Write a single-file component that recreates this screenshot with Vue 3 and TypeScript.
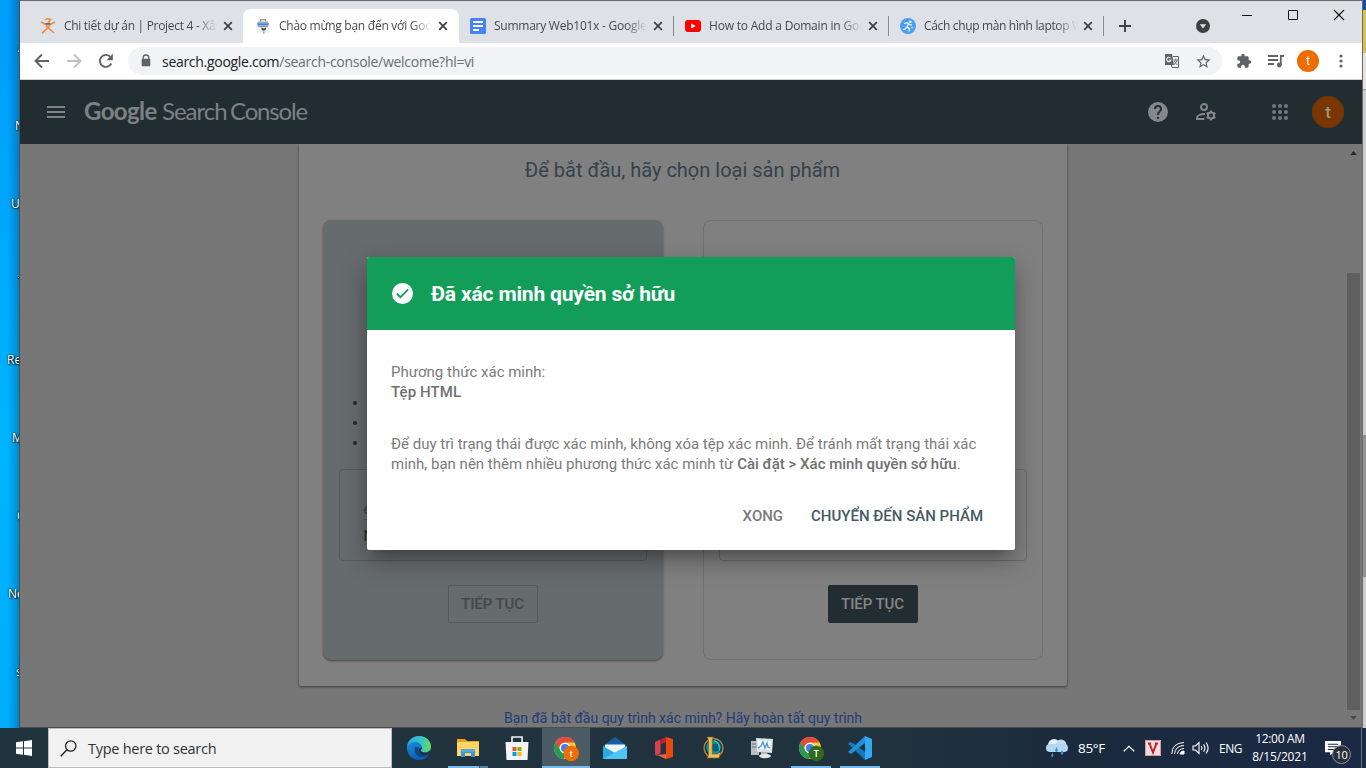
<script setup lang="ts">
interface Tab {
  title: string
  icon: 'person' | 'console' | 'docs' | 'youtube' | 'runner'
  spacing: number
  active?: boolean
  divider?: boolean
}

interface TaskItem {
  name: string
  state?: 'open' | 'stacked' | 'active'
}

const tabs: Tab[] = [
  { title: 'Chi tiết dự án | Project 4 - Xây', icon: 'person', spacing: -0.3 },
  { title: 'Chào mừng bạn đến với Google', icon: 'console', spacing: -0.26, active: true },
  { title: 'Summary Web101x - Google D', icon: 'docs', spacing: -0.25, divider: true },
  { title: 'How to Add a Domain in Google', icon: 'youtube', spacing: -0.2, divider: true },
  { title: 'Cách chụp màn hình laptop W', icon: 'runner', spacing: -0.34, divider: true },
]

const shortcuts = [
  { label: 'A', inset: 18 },
  { label: 'N', inset: 15 },
  { label: 'U', inset: 11 },
  { label: 'T', inset: 18 },
  { label: 'Re', inset: 7 },
  { label: 'M', inset: 12 },
  { label: 'C', inset: 17 },
  { label: 'Ne', inset: 8 },
  { label: 's', inset: 16 },
]

const taskItems: TaskItem[] = [
  { name: 'edge' },
  { name: 'explorer', state: 'stacked' },
  { name: 'store' },
  { name: 'chrome', state: 'active' },
  { name: 'mail' },
  { name: 'office' },
  { name: 'league' },
  { name: 'monitor' },
  { name: 'chrome2', state: 'open' },
  { name: 'code', state: 'open' },
]
</script>

<template>
  <div class="screen">
    <div class="workspace">
      <aside class="desktop">
        <span v-for="s in shortcuts" :key="s.label" class="shortcut" :style="{ paddingLeft: s.inset + 'px' }">{{ s.label }}</span>
      </aside>

      <section class="window">
        <div class="tabstrip">
          <div v-for="t in tabs" :key="t.title" class="tab" :class="{ active: t.active, divider: t.divider }">
            <svg v-if="t.icon === 'person'" class="favicon" viewBox="0 0 16 16" fill="none" stroke="#f08a3c" stroke-width="1.6">
              <path d="M5 1.6Q8-.2 10.5 1.6L8 5M1 4l5 2.5h4L15 4M6 6.5 8 10l2-3.500M8 9.500 2 15.300M8 9.500l6 5.500" /><path d="M5.500 5.800h5" stroke="#55709b" />
            </svg>
            <svg v-else-if="t.icon === 'console'" class="favicon" viewBox="0 0 16 16">
              <path d="M5.500 3.500V1.700h5v1.800" fill="none" stroke="#777b80" stroke-width="1.100" /><path d="M3 3.500h10L14.500 6v9h-13V6z" fill="#eceef0" /><path d="M3 3.500h10L14 6H2z" fill="#a9adb2" /><path d="M2.500 5.500h11v2h-11z" fill="#3b82e8" /><path d="M3 8.500h10" stroke="#8d9196" /><path d="M6.500 9.500v2l2 1.500 2.500-1.500v-2l-2 1z" fill="#46494d" /><path d="M8 12.500h1.500V16H8z" fill="#b6b9bc" />
            </svg>
            <svg v-else-if="t.icon === 'docs'" class="favicon" viewBox="0 0 16 16">
              <rect width="16" height="16" rx="1.500" fill="#4285f4" /><path d="M3 4h10M3 8h10M3 12h6" stroke="#fff" stroke-width="2" />
            </svg>
            <svg v-else-if="t.icon === 'youtube'" class="favicon" viewBox="0 0 16 16">
              <rect y="2" width="16" height="12" rx="3" fill="#f00" /><path d="m6.200 5.500 4.600 2.500-4.600 2.500z" fill="#fff" />
            </svg>
            <svg v-else class="favicon" viewBox="0 0 16 16">
              <circle cx="8" cy="8" r="8" fill="#4a9ff5" /><circle cx="10.300" cy="3.700" r="1.300" fill="#fff" /><path d="m4 5.500 3-.8 2.500 1.800 2.500.5M8.500 6 6.800 9l2.700 1.500-.5 3M6.800 9l-1 1.800L3 11.500M11.500 9l1 1" fill="none" stroke="#fff" stroke-width="1.200" />
            </svg>
            <span class="tab-title" :style="{ letterSpacing: t.spacing + 'px' }">{{ t.title }}</span>
            <svg class="tab-close" viewBox="0 0 16 16"><path d="m4.200 4.200 7.600 7.600M11.800 4.200l-7.600 7.600" stroke="#3c4043" stroke-width="1.700" /></svg>
          </div>
          <svg class="new-tab" viewBox="0 0 16 16"><path d="M8 2v12M2 8h12" stroke="#3c4043" stroke-width="1.900" /></svg>
          <svg class="tab-search" viewBox="0 0 14 14"><circle cx="7" cy="7" r="7" fill="#3c4043" /><path d="M3.800 5.200h6.400L7 9.400z" fill="#dee1e6" /></svg>
          <div class="window-buttons">
            <svg viewBox="0 0 12 12"><path d="M1 6.500h10" stroke="#111" /></svg>
            <svg viewBox="0 0 12 12"><path d="M1.500 1.500h9v9h-9z" fill="none" stroke="#111" /></svg>
            <svg viewBox="0 0 12 12"><path d="m1 1 10 10M11 1 1 11" stroke="#111" stroke-width="1.100" /></svg>
          </div>
        </div>

        <div class="toolbar">
          <svg class="nav" viewBox="0 0 16 16"><path d="M15 8H2M8 1.500 1.500 8 8 14.500" fill="none" stroke="#5f6368" stroke-width="1.900" /></svg>
          <svg class="nav" viewBox="0 0 16 16"><path d="M1 8h13M8 1.500 14.500 8 8 14.500" fill="none" stroke="#bdc1c6" stroke-width="1.900" /></svg>
          <svg class="nav" viewBox="0 0 16 16"><path d="M13.300 10.500A6 6 0 1 1 12.500 4" fill="none" stroke="#5f6368" stroke-width="1.900" /><path d="M14.800.8v6.400H8.500z" fill="#5f6368" /></svg>
          <div class="omnibox">
            <svg class="lock" viewBox="0 0 10 14"><path d="M2.200 6V3.800a2.800 2.800 0 0 1 5.600 0V6" fill="none" stroke="#5f6368" stroke-width="1.300" /><rect x=".7" y="4.700" width="8.600" height="7.600" rx="1" fill="#5f6368" /></svg>
            <span class="url"><b>search.google.com</b>/search-console/welcome?hl=vi</span>
            <svg class="translate" viewBox="0 0 16 16"><path d="M1 1h7l2 11H1z" fill="#5f6368" /><path d="M6.500 5A2.200 2.200 0 1 0 7 7H4.800" fill="none" stroke="#fff" stroke-width="1.100" /><path d="M9 3.500h5.500v11H8L7.500 12" fill="none" stroke="#5f6368" /><path d="M9.500 7H14M11.700 5.500V7M13 7q-.6 3-3 4.500M10.300 8q1 2 3 4" fill="none" stroke="#5f6368" stroke-width=".9" /></svg>
            <svg class="star" viewBox="0 0 24 24"><path fill="#5f6368" d="m22 9.240-7.190-.62L12 2 9.190 8.630 2 9.240l5.460 4.730L5.820 21 12 17.270 18.180 21l-1.630-7.030zM12 15.400l-3.760 2.270 1-4.280-3.320-2.880 4.380-.38L12 6.100l1.710 4.040 4.380.38-3.320 2.880 1 4.280z" /></svg>
          </div>
          <svg class="ext puzzle" viewBox="0 0 24 24"><path fill="#5f6368" d="M20.500 11H19V7c0-1.100-.9-2-2-2h-4V3.500a2.500 2.500 0 0 0-5 0V5H4c-1.100 0-2 .9-2 2v3.800h1.500a2.700 2.700 0 0 1 0 5.400H2V20c0 1.100.9 2 2 2h3.800v-1.500a2.700 2.700 0 0 1 5.400 0V22H17c1.100 0 2-.9 2-2v-4h1.500a2.500 2.500 0 0 0 0-5" /></svg>
          <svg class="ext" viewBox="0 0 16 16"><path d="M0 3h10M0 7h10M0 11h6" stroke="#5f6368" stroke-width="1.800" /><path d="M12.800 12V3H16" fill="none" stroke="#5f6368" stroke-width="1.800" /><circle cx="11.300" cy="12" r="2.400" fill="#5f6368" /></svg>
          <span class="profile">t</span>
          <svg class="kebab" viewBox="0 0 4 16"><g fill="#5f6368"><circle cx="2" cy="3" r="1.600" /><circle cx="2" cy="8" r="1.600" /><circle cx="2" cy="13" r="1.600" /></g></svg>
        </div>

        <header class="appbar">
          <svg class="menu" viewBox="0 0 18 12"><path d="M0 1h18M0 6h18M0 11h18" stroke="#808486" stroke-width="2" /></svg>
          <div class="brand"><span class="brand-google">Google</span><span class="brand-search">Search</span><span class="brand-console">Console</span></div>
          <svg class="help" viewBox="2 2 20 20"><path fill="#858889" d="M12 2a10 10 0 1 0 0 20 10 10 0 0 0 0-20m1 17h-2v-2h2zm2.070-7.750-.9.920C13.450 12.900 13 13.500 13 15h-2v-.5c0-1.100.45-2.100 1.170-2.830l1.240-1.260c.37-.36.59-.86.590-1.410a2 2 0 0 0-4 0H8a4 4 0 0 1 8 0c0 .88-.36 1.680-.93 2.250" /></svg>
          <svg class="manage" viewBox="0 0 22 20" fill="none" stroke="#858889" stroke-width="1.900"><circle cx="9" cy="5" r="3" /><path d="M9.500 17H2v-1.500c0-2 3.500-3.500 8-3.500" /><circle cx="16" cy="13.500" r="3" /><path d="M16 8.500v2M16 16.500v2M11.700 11l1.700 1M18.600 15l1.700 1M11.700 16l1.700-1M18.600 12l1.700-1" stroke-width="2.200" /></svg>
          <svg class="apps" viewBox="0 0 16 16"><g fill="#777b7d"><circle v-for="n in 9" :key="n" :cx="2 + ((n - 1) % 3) * 6" :cy="2 + Math.floor((n - 1) / 3) * 6" r="2" /></g></svg>
          <span class="account">t</span>
        </header>

        <main class="viewport">
          <div class="sheet">
            <h1>Để bắt đầu, hãy chọn loại sản phẩm</h1>
            <div class="options">
              <div class="option chosen">
                <ul><li></li><li></li><li></li></ul>
                <div class="field"><span class="sample">example.com</span><span class="hint">Nhập miền</span></div>
                <button class="go disabled">TIẾP TỤC</button>
              </div>
              <div class="option">
                <div class="field"></div>
                <button class="go">TIẾP TỤC</button>
              </div>
            </div>
          </div>
          <a class="resume">Bạn đã bắt đầu quy trình xác minh? Hãy hoàn tất quy trình</a>
          <div class="scrollbar">
            <svg viewBox="0 0 8 5"><path d="M0 5 4 0l4 5z" fill="#292929" /></svg>
            <div class="thumb"></div>
            <svg viewBox="0 0 8 5"><path d="m0 0 4 5 4-5z" fill="#464646" /></svg>
          </div>
        </main>

        <div class="dialog">
          <div class="dialog-head">
            <svg viewBox="2 2 20 20"><circle cx="12" cy="12" r="10" fill="#fff" /><path d="m6.500 12 3.500 3.500 7.500-7.500" fill="none" stroke="#129e59" stroke-width="1.700" /></svg>
            <h2>Đã xác minh quyền sở hữu</h2>
          </div>
          <div class="dialog-body">
            <p class="method">Phương thức xác minh:<br /><b>Tệp HTML</b></p>
            <p class="note">Để duy trì trạng thái được xác minh, không xóa tệp xác minh. Để tránh mất trạng thái xác<br />minh, bạn nên thêm nhiều phương thức xác minh từ <b>Cài đặt &gt; Xác minh quyền sở hữu</b>.</p>
            <div class="actions"><button>XONG</button><button class="primary">CHUYỂN ĐẾN SẢN PHẨM</button></div>
          </div>
        </div>
      </section>

      <aside class="behind">
        <i class="blue"></i><i class="yellow"></i><i class="plain"></i><i class="track"></i><i class="grip"></i><i class="rest"></i>
      </aside>
    </div>

    <footer class="taskbar">
      <div class="start"><svg viewBox="0 0 16 16"><path d="M0 2.300 7 1.300v6.300H0zM8 1.200 16 0v7.600H8zM0 8.500h7v6.300l-7-1zM8 8.500h8V16l-8-1.200z" fill="#fff" /></svg></div>
      <div class="search">
        <svg viewBox="0 0 17 17"><circle cx="10.700" cy="6" r="5.200" fill="none" stroke="#222" stroke-width="1.300" /><path d="M7 9.800.7 16.200" stroke="#222" stroke-width="1.400" /></svg>
        <span>Type here to search</span>
      </div>
      <div class="tasks">
        <div v-for="item in taskItems" :key="item.name" class="task" :class="item.state">
          <svg v-if="item.name === 'edge'" viewBox="0 0 24 24">
            <defs>
              <linearGradient id="edge-top" x1="0" x2="1"><stop stop-color="#2aa8e0" /><stop offset=".6" stop-color="#35c6c5" /><stop offset="1" stop-color="#6bdc4e" /></linearGradient>
              <linearGradient id="edge-low" x1="0" y1="0" x2=".4" y2="1"><stop stop-color="#2396dd" /><stop offset="1" stop-color="#0a5cba" /></linearGradient>
            </defs>
            <circle cx="12" cy="12" r="12" fill="url(#edge-low)" />
            <path d="M0 11C1 3.500 6.500 0 12 0c7.500 0 12 5.300 12 10.500 0 4-3 6-6.200 6-2.500 0-4.100-1-4.100-1.900 0-.6 1.300-1.200 1.300-3.100C15 8.500 12 6 8 6c-4 0-7 2.500-8 5" fill="url(#edge-top)" />
            <path d="M8.500 10.500C6 15 9 21 14.500 21c3 0 5.500-1 7.500-2.800-2.500.8-6 .8-8.500-.7-2.300-1.400-2.800-3.500-1.500-5.500z" fill="#12477f" />
            <path d="M15 11.500c0 1.900-1.300 2.500-1.300 3.100 0 .9 1.600 1.900 4.100 1.900 2 0 4-.8 5.200-2.300L24 18c-5 2-10 .8-11.500-1.300-1.300-1.700-.8-3.700.5-5.200z" fill="#20343d" />
          </svg>
          <svg v-else-if="item.name === 'explorer'" viewBox="0 0 24 24">
            <path d="M1 3h8l2 2h12v15H1z" fill="#e9a51d" /><path d="M1 6h22v14H1z" fill="#ffd665" /><path d="M5 21v-8h14v8h-4v-4H9v4z" fill="#3c93d6" /><path d="M5 13h14v3H5z" fill="#55a6e0" />
          </svg>
          <svg v-else-if="item.name === 'store'" viewBox="0 0 24 24">
            <path d="M7 6V1h10v5" fill="none" stroke="#f4f4f4" stroke-width="1.600" /><path d="M.5 6h23l-1 18h-21z" fill="#f4f4f4" /><path d="M7.500 11h4v4h-4z" fill="#f05024" /><path d="M12.500 11h4v4h-4z" fill="#7eb900" /><path d="M7.500 16h4v4h-4z" fill="#00a3ee" /><path d="M12.500 16h4v4h-4z" fill="#feb800" />
          </svg>
          <svg v-else-if="item.name === 'chrome' || item.name === 'chrome2'" viewBox="0 0 24 24">
            <circle cx="11" cy="12" r="11" fill="#f6c736" /><path d="M11 1a11 11 0 0 1 9.500 5.500H11A5.500 5.500 0 0 0 6 15L1.500 6.500A11 11 0 0 1 11 1" fill="#e24b3d" /><path d="m1.500 6.500 4.800 8.300A5.500 5.500 0 0 0 12 17.500L10 23A11 11 0 0 1 1.500 6.500" fill="#259b55" /><circle cx="11" cy="12" r="5.200" fill="#fff" /><circle cx="11" cy="12" r="4.100" fill="#4281e8" />
            <circle cx="17.300" cy="17.500" r="7.800" :fill="item.name === 'chrome' ? '#ef6c00' : '#33691e'" /><text x="17.300" y="20.800" text-anchor="middle" class="badge-letter">{{ item.name === 'chrome' ? 't' : 'T' }}</text>
          </svg>
          <svg v-else-if="item.name === 'mail'" viewBox="0 0 24 24">
            <path d="M0 10 12 1l12 9v4H0z" fill="#1260a8" /><path d="M2 8.500h20V17H2z" fill="#f2f6fa" /><path d="m0 10 12 7 12-7v13H0z" fill="#29a9ea" /><path d="M0 23 24 10v13z" fill="#50c4f4" />
          </svg>
          <svg v-else-if="item.name === 'office'" viewBox="0 0 24 24">
            <path d="M3 6 14 1l1 5-6 2v9l-5 2z" fill="#b52532" /><path d="m3 6 5-2v13l-4 3-1-2z" fill="#d34353" /><path d="m14 1 7 2v18l-7 2z" fill="#e8490c" /><path d="m5 19 9-1v5z" fill="#f0643a" />
          </svg>
          <svg v-else-if="item.name === 'league'" viewBox="0 0 24 24">
            <circle cx="12.500" cy="12" r="9.500" fill="#103c4c" stroke="#b08a3c" stroke-width="1.300" /><circle cx="12.500" cy="11.500" r="7.300" fill="#178ea0" /><circle cx="14.500" cy="11.500" r="4" fill="#0e5f78" /><path d="M13 4.500q6 2 5.500 10" fill="none" stroke="#2cc4cf" stroke-width="1.300" /><path d="M6 1h6.500l-1.300 3v14h4.800l3.500-2-1.500 6H6l1.500-3V4z" fill="#e8c05c" stroke="#805d20" stroke-width=".7" />
          </svg>
          <svg v-else-if="item.name === 'monitor'" viewBox="0 0 24 24">
            <path d="M1 5h8v14H1z" fill="#b8bdc0" /><path d="M2 8h5M2 11h5" stroke="#69777e" /><path d="m6 2 17 1-1 14L7 16z" fill="#dee1e3" /><path d="m8 4 13 1-1 9-12-1z" fill="#eff7fc" /><path d="m8 12 3-2 2-4 2 6 2-5 1 4 2 1" fill="none" stroke="#4b98c6" stroke-width="1.300" /><path d="M11 16h6l1 4h-7z" fill="#aeb4b7" /><ellipse cx="15" cy="20" rx="6" ry="2.200" fill="#e3e5e6" />
          </svg>
          <svg v-else viewBox="0 0 24 24">
            <path d="M17 0v24L2 9.500 0 8l2-2 3 1 12 9z" fill="#1479bd" /><path d="M17 0v7L3 18l-3-2 17-16" fill="#238fd5" /><path d="m17 0 7 3v18l-7 3z" fill="#32a9f0" />
          </svg>
        </div>
      </div>
      <div class="tray">
        <svg class="weather" viewBox="0 0 22 20"><circle cx="8" cy="7" r="6" fill="#e3f1fb" /><circle cx="15" cy="7" r="5.500" fill="#c0def4" /><rect y="6" width="22" height="8" rx="4" fill="#b6d7f1" /><path d="m5 17.500 1.300-3 1.300 3q-1.300 3.500-2.600 0m4-5L10.500 9l1.500 3.500q-1.500 3-3 0M14.500 15l1.500-3 1.500 3q-1.500 4-3 0" fill="#2a91e0" /></svg>
        <span class="temp">85°F</span>
        <svg class="caret" viewBox="0 0 12 7"><path d="m.7 6.300 5.300-5 5.300 5" fill="none" stroke="#fff" stroke-width="1.300" /></svg>
        <svg class="vkey" viewBox="0 0 16 16"><rect width="16" height="16" fill="#f2dede" /><path d="M.5.500h15v15H.5z" fill="none" stroke="#d79b9b" /><path d="M3 3.500h3M10 3.500h3M4.500 3.500 8 12.500l3.500-9" fill="none" stroke="#bd2529" stroke-width="2" /></svg>
        <svg class="wifi" viewBox="0 0 14 14" fill="none" stroke="#fff"><path d="M.8 13Q1 2 13 1.500M3.500 13Q4 5 13 4.500M6.300 13Q7 8 13 7.500" /><path d="M9 13q.5-3 4-3v3z" fill="#fff" /></svg>
        <svg class="sound" viewBox="0 0 18 14" fill="none" stroke="#fff" stroke-width="1.100"><path d="M1 5h2.500L7 1.500v11L3.500 9H1zM9.300 5q1.500 2 0 4M11.500 3.300q3 3.700 0 7.400M14 1.500q4.300 5.500 0 11" /></svg>
        <span class="lang">ENG</span>
        <div class="clock"><span>12:00 AM</span><span>8/15/2021</span></div>
        <div class="notice">
          <svg viewBox="0 0 17 16"><path d="M0 0h17v12H9l-3.500 3.500V12H0z" fill="#fff" /><path d="M3 3.500h11M3 6.200h11M3 9h8" stroke="#1c2a45" stroke-width="1.100" /></svg>
          <span>10</span>
        </div>
        <i class="peek"></i>
      </div>
    </footer>
  </div>
</template>

<style>
body { margin: 0; overflow: hidden; }
</style>

<style scoped>
* { box-sizing: border-box; }
svg { display: block; flex: none; overflow: visible; }
p, h1, h2, ul { margin: 0; padding: 0; }
.screen { width: 1366px; height: 768px; overflow: hidden; font-family: "Open Sans", "Noto Sans", sans-serif; }
.workspace { display: flex; height: 728px; }

.desktop { width: 20px; overflow: hidden; padding-top: 8px; background: linear-gradient(90deg, transparent 40%, rgba(0, 35, 70, .28)), linear-gradient(#009cfa, #00b4ff 60%, #00aefc); border-right: 1px solid #3f525c; }
.shortcut { display: flex; align-items: center; height: 78px; font-size: 12px; color: #fff; white-space: nowrap; text-shadow: 1px 1px 2px #000, 0 0 2px #000; }

.window { position: relative; display: flex; flex-direction: column; width: 1342px; background: #777; }
.tabstrip { display: flex; height: 43px; padding-left: 8px; background: #dee1e6; border-top: 1px solid #68696c; }
.tab { position: relative; display: flex; align-items: center; width: 215px; height: 34px; margin-top: 8px; padding-left: 12px; }
.tab.active { background: #fff; border-radius: 8px 8px 0 0; width: 216px; margin-right: -1px; }
.tab.divider::after { content: ""; position: absolute; right: -1px; top: 7px; width: 1px; height: 20px; background: #85888d; }
.favicon { width: 16px; height: 16px; }
.tab-title { width: 153px; margin-left: 8px; overflow: hidden; white-space: nowrap; font-size: 12px; line-height: 18px; color: #45484c; mask-image: linear-gradient(90deg, #000 132px, transparent 153px); }
.tab-close { width: 16px; height: 16px; margin-left: 3px; }
.new-tab { width: 16px; height: 16px; margin: 17px 0 0 14px; }
.tab-search { width: 14px; height: 14px; margin: 18px 0 0 63px; }
.window-buttons { display: flex; gap: 34px; margin: 8px 0 0 31px; }
.window-buttons svg { width: 12px; height: 12px; }

.toolbar { display: flex; align-items: center; height: 37px; padding-left: 14px; background: #fff; border-bottom: 1px solid #cfd1d4; }
.nav { width: 16px; height: 16px; margin-right: 16px; }
.omnibox { display: flex; align-items: center; width: 1094px; height: 28px; margin-left: -2px; border-radius: 14px; background: #f1f3f4; padding: 0 10px 0 13px; }
.lock { width: 10px; height: 14px; }
.url { flex: 1; margin-left: 11px; font-size: 14px; letter-spacing: -.29px; color: #6a6e72; }
.url b { font-weight: 400; color: #202124; }
.translate { width: 16px; height: 16px; margin-right: 15px; }
.star { width: 17px; height: 17px; }
.ext { width: 16px; height: 16px; margin-left: 16px; }
.puzzle { margin-left: 14px; }
.profile { display: grid; place-items: center; width: 22px; height: 22px; margin-left: 13px; border-radius: 50%; background: #ef6c00; color: #fff; font: 12px Roboto, sans-serif; }
.kebab { width: 4px; height: 16px; margin-left: 20px; }

.appbar { display: flex; align-items: center; height: 64px; padding-left: 27px; background: #222d32; }
.menu { width: 18px; height: 12px; }
.brand { display: flex; width: 1064px; margin: -3px 0 0 19px; font: 24px Lato, sans-serif; color: #7d8183; white-space: nowrap; }
.brand-google { width: 78px; font-weight: 700; letter-spacing: -.6px; }
.brand-search { width: 68px; letter-spacing: -1px; }
.brand-console { letter-spacing: -1.150px; }
.help { width: 20px; height: 20px; }
.manage { width: 22px; height: 20px; margin-left: 27px; }
.apps { width: 16px; height: 16px; margin-left: 55px; }
.account { display: grid; place-items: center; width: 32px; height: 32px; margin-left: 24px; border-radius: 50%; background: #783600; color: #a09489; font: 500 17px Roboto, sans-serif; }

.viewport { position: relative; display: flex; flex-direction: column; align-items: center; height: 584px; padding-right: 16px; background: #777; overflow: hidden; font-family: Roboto, sans-serif; border-bottom: 1px solid #4c4f51; }
.sheet { flex: none; width: 768px; height: 542px; margin-left: -1px; padding: 0 24px; background: #808080; border-radius: 0 0 2px 2px; box-shadow: 0 1px 3px rgba(0, 0, 0, .5); }
h1 { height: 76px; padding-top: 14px; text-align: center; font-size: 20px; font-weight: 400; line-height: 24px; letter-spacing: 0; color: #35424a; }
.options { display: flex; gap: 40px; }
.option { display: flex; flex-direction: column; align-items: center; justify-content: flex-end; width: 340px; height: 440px; padding-bottom: 36px; border: 1px solid #707070; border-radius: 8px; }
.chosen { background: #666b6e; border-color: #666b6e; box-shadow: 0 1px 2px rgba(0, 0, 0, .45); }
ul { align-self: stretch; margin: 0 0 16px 29px; list-style: none; }
li { display: flex; align-items: center; height: 20px; }
li::before { content: ""; width: 4px; height: 4px; border-radius: 50%; background: #24292c; }
.field { display: flex; flex-direction: column; width: 308px; height: 92px; margin-bottom: 24px; padding: 29px 24px 0; border: 1px solid #6c6c6c; border-radius: 4px; font-size: 14px; line-height: 20px; }
.chosen .field { border-color: #565b5e; }
.sample { color: #3d4143; border-bottom: 1px solid #51565a; }
.hint { margin-top: 6px; color: #24292c; }
.go { width: 90px; height: 38px; padding: 0; border: 0; border-radius: 2px; background: #222d32; color: #858585; font: 500 15px Roboto, sans-serif; letter-spacing: -.1px; }
.go.disabled { background: transparent; border: 1px solid #54595c; color: #43484b; }
.resume { margin-top: 22px; font-size: 14px; line-height: 20px; color: #203d78; white-space: nowrap; }
.scrollbar { position: absolute; top: 0; right: 1px; display: flex; flex-direction: column; align-items: center; width: 15px; height: 100%; padding-top: 7px; }
.scrollbar svg { width: 7px; height: 4px; }
.thumb { width: 13px; height: 437px; margin: 118px 0 6px; background: #5f5f5f; }

.dialog { position: absolute; left: 347px; top: 257px; width: 648px; height: 293px; border-radius: 2px; background: #fff; box-shadow: 0 11px 15px -7px rgba(0, 0, 0, .25), 0 10px 26px 2px rgba(0, 0, 0, .24); font-family: Roboto, sans-serif; color: #7b7b7b; }
.dialog-head { display: flex; align-items: center; height: 73px; padding-left: 25px; background: #129e59; border-radius: 2px 2px 0 0; }
.dialog-head svg { width: 21px; height: 21px; margin-right: 18px; }
h2 { font-size: 21px; font-weight: 700; line-height: 28px; letter-spacing: -.16px; color: #fff; }
.dialog-body { padding: 32px 24px 0; font-size: 15px; line-height: 20px; white-space: nowrap; }
.dialog-body b { font-weight: 500; color: #707070; }
.method b { letter-spacing: .1px; }
.note { margin-top: 32px; }
.actions { display: flex; justify-content: flex-end; gap: 28px; margin-top: 32px; padding-right: 8px; }
.actions button { padding: 0; border: 0; background: none; color: #7b7b7b; font: 500 15px/20px Roboto, sans-serif; }
.actions .primary { color: #455a64; }

.behind { display: flex; flex-direction: column; width: 4px; border-left: 1px solid #68696b; }
.behind .blue { height: 10px; background: #164ba6; }
.behind .yellow { height: 43px; background: #d9c052; }
.behind .plain { height: 37px; background: #e6e3e2; border-bottom: 1px solid #999; }
.behind .track { height: 345px; background: #cdcdcd; }
.behind .grip { height: 142px; background: #929292; }
.behind .rest { flex: 1; background: #cdcdcd; }

.taskbar { display: flex; height: 40px; background: linear-gradient(90deg, #20343d, #20323e 65%, #1b2b3d 78%, #1b2945); color: #fff; }
.start { display: grid; place-items: center; width: 48px; }
.start svg { width: 16px; height: 16px; }
.search { display: flex; align-items: center; width: 344px; padding-left: 11px; background: #f1f1f1; border: 1px solid #bababa; color: #30343a; font-size: 14.500px; }
.search svg { width: 17px; height: 17px; }
.search span { margin-left: 11px; letter-spacing: -.27px; }
.tasks { display: flex; gap: 1px; margin-left: 3px; }
.task { position: relative; display: grid; place-items: center; width: 48px; }
.task svg { width: 24px; height: 24px; }
.task.open::after, .task.stacked::after { content: ""; position: absolute; left: 4px; bottom: 0; width: 40px; height: 2px; background: #76b9ed; }
.task.stacked::after { background: linear-gradient(90deg, #76b9ed 31px, #33536a 31px 32px, #55839f 32px); }
.task.active { background: linear-gradient(#4b5c64 38px, #76b9ed 38px); }
.badge-letter { font: 500 9px Roboto, sans-serif; fill: #fff; }
.tray { display: flex; align-items: center; flex: 1; margin-left: 162px; }
.weather { width: 22px; height: 20px; }
.temp { width: 43px; margin-left: 10px; font-size: 13.500px; letter-spacing: -.3px; }
.caret { width: 12px; height: 7px; margin-left: 2px; }
.vkey { width: 16px; height: 16px; margin-left: 10px; }
.wifi { width: 14px; height: 14px; margin-left: 10px; }
.sound { width: 18px; height: 14px; margin-left: 7px; }
.lang { width: 25px; margin-left: 9px; font-size: 12px; letter-spacing: -.5px; }
.clock { display: flex; flex-direction: column; align-items: center; width: 72px; font-size: 12px; line-height: 18px; letter-spacing: -.3px; white-space: nowrap; }
.clock span:last-child { letter-spacing: -.15px; }
.notice { position: relative; margin-left: 9px; }
.notice svg { width: 16px; height: 15px; }
.notice span { position: absolute; left: 7px; top: 4px; display: grid; place-items: center; width: 19px; height: 19px; border: 1px solid #8b919b; border-radius: 50%; background: #2a2f38; font-size: 11px; letter-spacing: -.3px; }
.peek { width: 1px; height: 100%; margin-left: 20px; background: #6c7482; }
</style>
